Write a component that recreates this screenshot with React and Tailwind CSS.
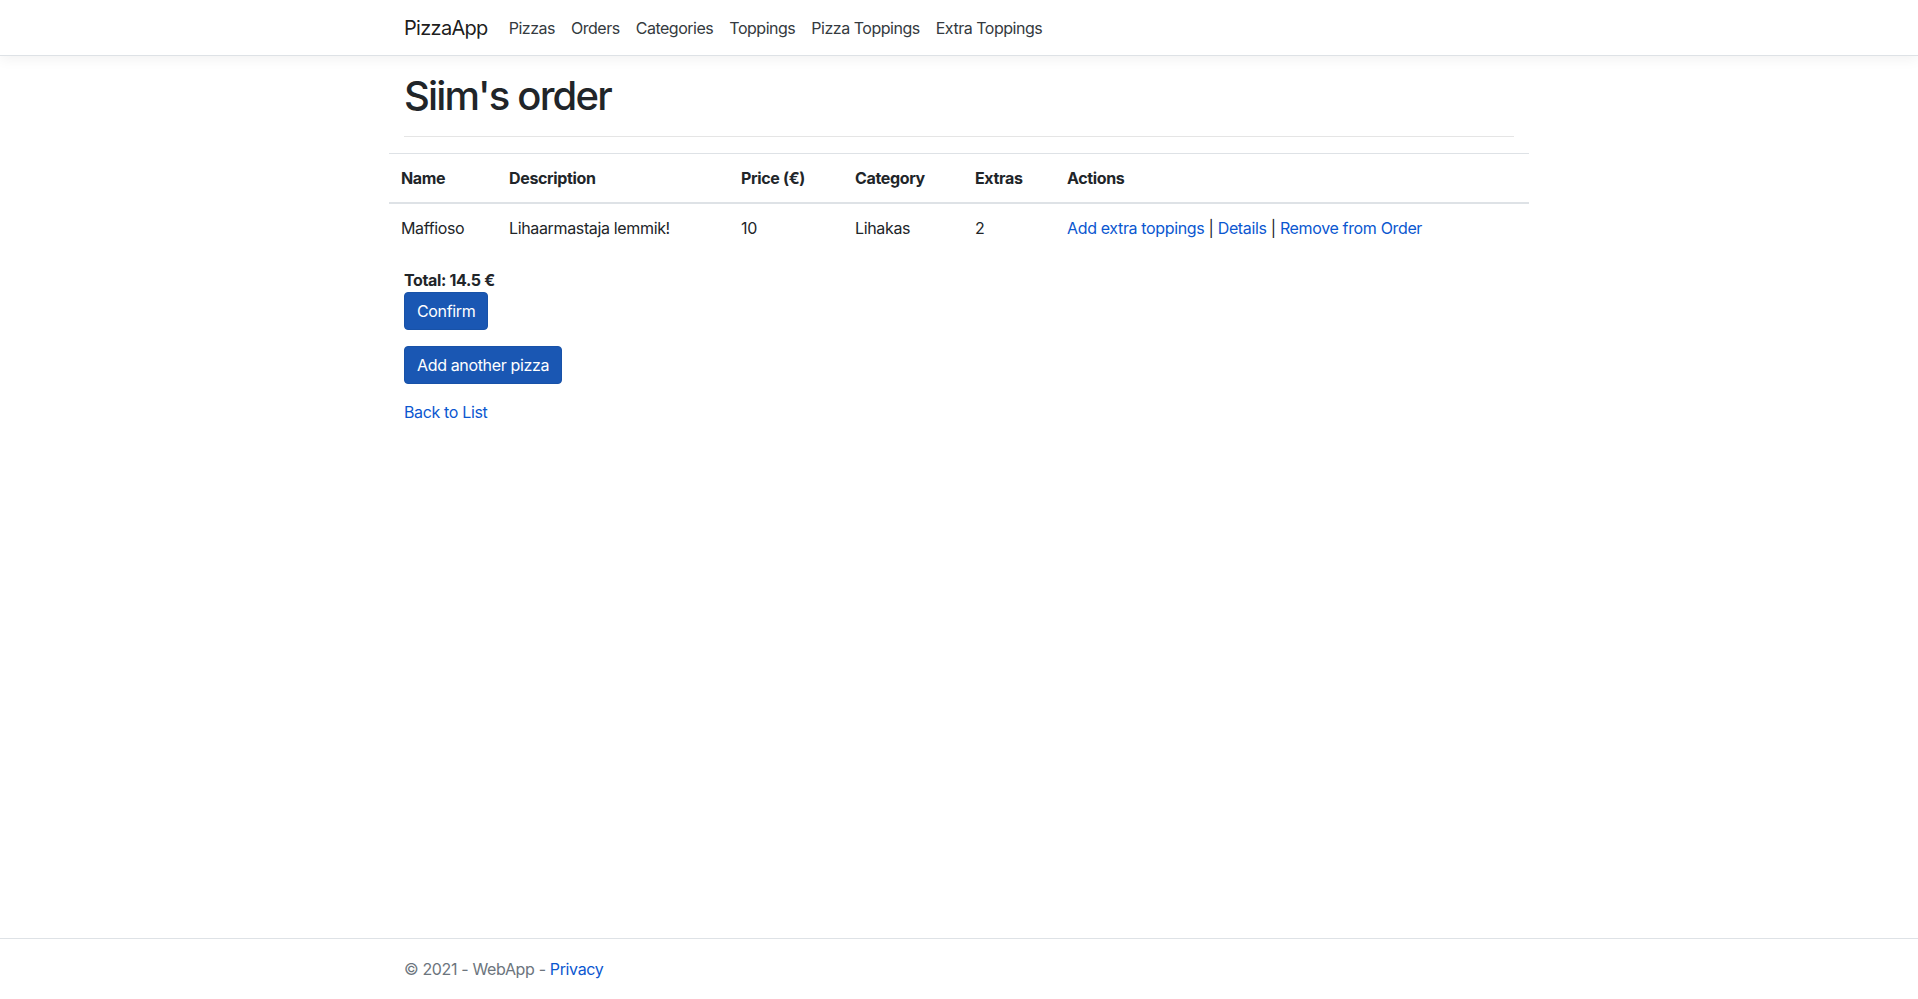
export default function App() {
  const font = { fontFamily: 'Inter, "Liberation Sans", Arial, sans-serif' };
  return (
    <div className="min-h-screen flex flex-col bg-white text-[#212529] text-[16px] leading-6 tracking-[-0.022em]" style={font}>
      <header>
        <nav className="h-[56px] bg-white border-b border-[#dee2e6] shadow-[0_4px_12px_rgba(0,0,0,0.05)] flex items-center">
          <div className="w-[1140px] mx-auto px-[15px] flex items-center">
            <a className="text-[20px] leading-[30px] text-[rgba(0,0,0,0.9)] mr-[13px] tracking-[-0.035em]">PizzaApp</a>
            <ul className="flex items-center tracking-[-0.03em]">
              {["Pizzas", "Orders", "Categories", "Toppings", "Pizza Toppings", "Extra Toppings"].map((l) => (
                <li key={l}>
                  <a className="block px-2 py-2 text-[#343a40]">{l}</a>
                </li>
              ))}
            </ul>
          </div>
        </nav>
      </header>

      <div className="w-[1140px] mx-auto px-[15px] mt-4 flex-1">
        <main className="pb-4">
          <h1 className="text-[40px] leading-[48px] font-medium tracking-[-0.045em]">Siim's order</h1>
          <hr className="my-4 border-0 border-t border-[#e5e5e5]" />
          <div className="-mx-[15px]">
            <table className="w-full border-collapse text-left mb-4">
              <thead>
                <tr>
                  <th className="w-[108px] p-3 font-bold border-t border-[#dee2e6] border-b-2 border-b-[#dee2e6]">Name</th>
                  <th className="w-[232px] p-3 font-bold border-t border-[#dee2e6] border-b-2 border-b-[#dee2e6]">Description</th>
                  <th className="w-[114px] p-3 font-bold border-t border-[#dee2e6] border-b-2 border-b-[#dee2e6]">Price (€)</th>
                  <th className="w-[120px] p-3 font-bold border-t border-[#dee2e6] border-b-2 border-b-[#dee2e6]">Category</th>
                  <th className="w-[92px] p-3 font-bold border-t border-[#dee2e6] border-b-2 border-b-[#dee2e6]">Extras</th>
                  <th className="p-3 font-bold border-t border-[#dee2e6] border-b-2 border-b-[#dee2e6]">Actions</th>
                </tr>
              </thead>
              <tbody>
                <tr>
                  <td className="p-3">Maffioso</td>
                  <td className="p-3">Lihaarmastaja lemmik!</td>
                  <td className="p-3">10</td>
                  <td className="p-3">Lihakas</td>
                  <td className="p-3">2</td>
                  <td className="p-3">
                    <a className="text-[#0b57d0]">Add extra toppings</a> |{" "}
                    <a className="text-[#0b57d0]">Details</a> |{" "}
                    <a className="text-[#0b57d0]">Remove from Order</a>
                  </td>
                </tr>
              </tbody>
            </table>
          </div>
          <div className="font-bold">Total: 14.5 €</div>
          <div className="mb-4">
            <button className="px-3 py-[6px] rounded-[4px] bg-[#1a57b3] border border-[#1852a8] text-white tracking-[-0.022em]">Confirm</button>
          </div>
          <div className="mb-4">
            <button className="px-3 py-[6px] rounded-[4px] bg-[#1a57b3] border border-[#1852a8] text-white tracking-[-0.022em]">Add another pizza</button>
          </div>
          <div>
            <a className="text-[#0b57d0]">Back to List</a>
          </div>
        </main>
      </div>

      <footer className="border-t border-[#dee2e6] text-[#6c757d] leading-[60px] whitespace-nowrap">
        <div className="w-[1140px] mx-auto px-[15px]">
          © 2021 - WebApp - <a className="text-[#0b57d0]">Privacy</a>
        </div>
      </footer>
    </div>
  );
}
